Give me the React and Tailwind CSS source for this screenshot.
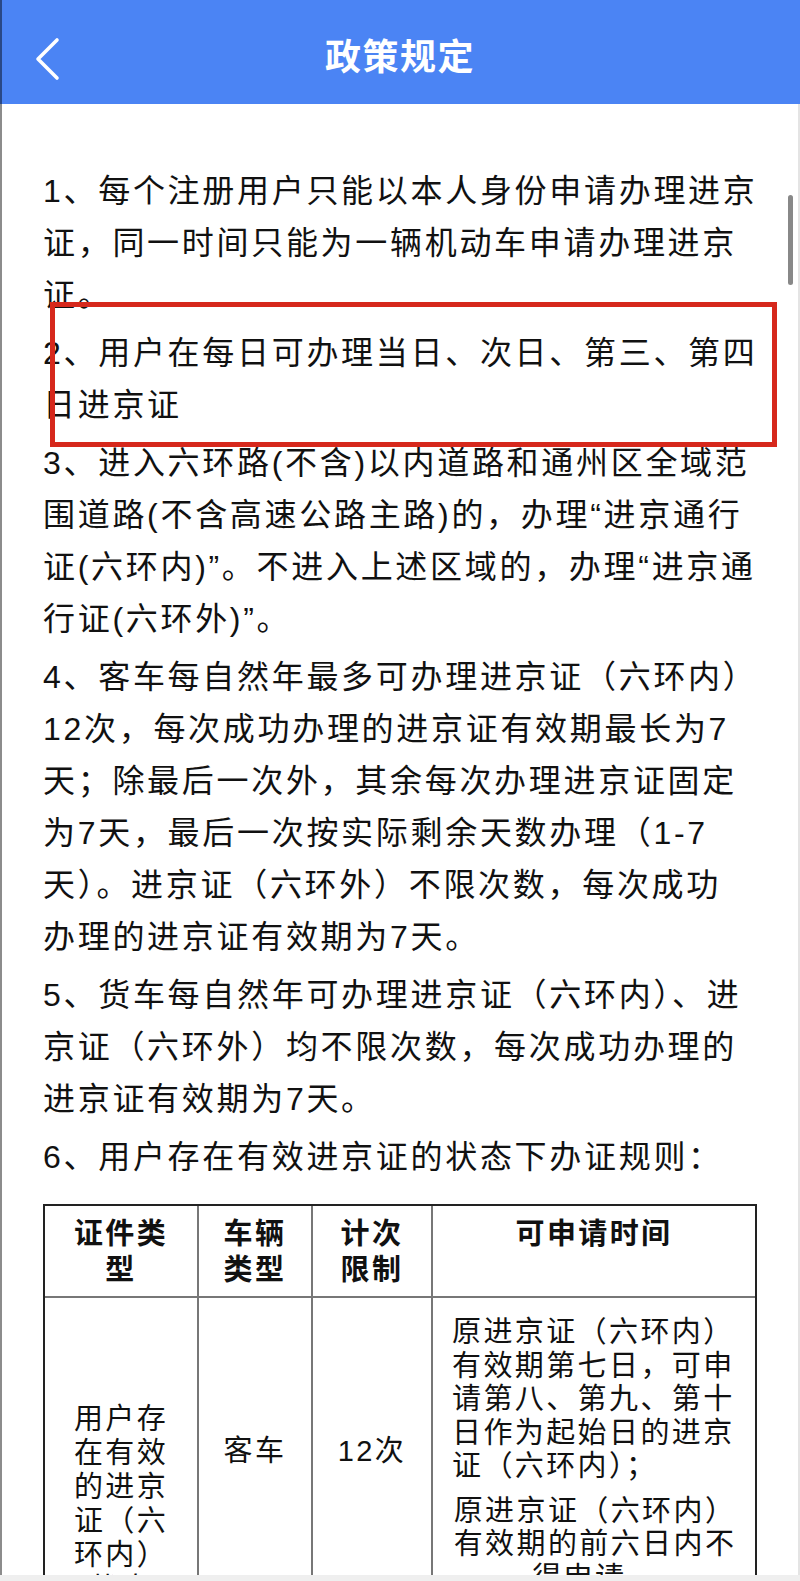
const paragraphs = [
  [
    "1、每个注册用户只能以本人身份申请办理进京",
    "证，同一时间只能为一辆机动车申请办理进京",
    "证。",
  ],
  ["2、用户在每日可办理当日、次日、第三、第四", "日进京证"],
  [
    "3、进入六环路(不含)以内道路和通州区全域范",
    "围道路(不含高速公路主路)的，办理“进京通行",
    "证(六环内)”。不进入上述区域的，办理“进京通",
    "行证(六环外)”。",
  ],
  [
    "4、客车每自然年最多可办理进京证（六环内）",
    "12次，每次成功办理的进京证有效期最长为7",
    "天；除最后一次外，其余每次办理进京证固定",
    "为7天，最后一次按实际剩余天数办理（1-7",
    "天）。进京证（六环外）不限次数，每次成功",
    "办理的进京证有效期为7天。",
  ],
  [
    "5、货车每自然年可办理进京证（六环内）、进",
    "京证（六环外）均不限次数，每次成功办理的",
    "进京证有效期为7天。",
  ],
  ["6、用户存在有效进京证的状态下办证规则："],
];

function Lines({ lines, className = "" }) {
  return (
    <div className={className}>
      {lines.map((l) => (
        <div key={l} className="whitespace-nowrap">
          {l}
        </div>
      ))}
    </div>
  );
}

export default function App() {
  return (
    <div className="relative h-[1581px] w-[800px] overflow-hidden bg-white font-['Liberation_Sans','Noto_Sans_CJK_SC',sans-serif] text-[#111]">
      <header className="relative flex h-[104px] items-center justify-center bg-[#4b84f4] pt-[12px]">
        <svg className="absolute left-[30px] top-[36px] h-[46px] w-[34px]" viewBox="0 0 34 46" fill="none">
          <path d="M27 4 L8 23 L27 42" stroke="white" strokeWidth="3.6" strokeLinecap="round" strokeLinejoin="round" />
        </svg>
        <h1 className="text-[36px] font-bold tracking-[1.5px] text-white">政策规定</h1>
      </header>

      <main className="px-[43px] pt-[61px]">
        <div className="flex flex-col gap-[6px] text-[32px] leading-[52px] tracking-[2.7px]">
          {paragraphs.map((p, i) => (
            <Lines key={i} lines={p} />
          ))}
        </div>

        <table className="mt-[21px] w-[714px] table-fixed border-separate border-spacing-0 border-2 border-[#222] text-[29px] leading-[34px] tracking-[2.4px]">
          <colgroup>
            <col className="w-[154px]" />
            <col className="w-[114px]" />
            <col className="w-[120px]" />
            <col className="w-[322px]" />
          </colgroup>
          <thead>
            <tr className="align-top font-bold leading-[36px]">
              <th className="border-b-2 border-r-2 border-[#777] px-[20px] pb-[8px] pt-[10px]">证件类型</th>
              <th className="border-b-2 border-r-2 border-[#777] px-[20px] pb-[8px] pt-[10px]">车辆类型</th>
              <th className="border-b-2 border-r-2 border-[#777] px-[20px] pb-[8px] pt-[10px]">计次限制</th>
              <th className="border-b-2 border-[#777] px-[10px] pb-[8px] pt-[10px]">可申请时间</th>
            </tr>
          </thead>
          <tbody>
            <tr className="h-[320px] align-top">
              <td className="border-r-2 border-[#777] pt-[104px] text-center">
                <Lines lines={["用户存", "在有效", "的进京", "证（六", "环内）", "状态"]} />
              </td>
              <td className="border-r-2 border-[#777] pt-[136px] text-center">客车</td>
              <td className="border-r-2 border-[#777] pt-[136px] text-center">12次</td>
              <td className="pl-[19px] pt-[18px] leading-[33.5px]">
                <Lines
                  lines={[
                    "原进京证（六环内）",
                    "有效期第七日，可申",
                    "请第八、第九、第十",
                    "日作为起始日的进京",
                    "证（六环内）；",
                  ]}
                />
                <Lines
                  className="mt-[11px] w-[286px] text-center"
                  lines={["原进京证（六环内）", "有效期的前六日内不", "得申请。"]}
                />
              </td>
            </tr>
          </tbody>
        </table>
      </main>

      {/* highlight box drawn over item 2 */}
      <div className="absolute left-[50px] top-[302px] h-[145px] w-[727px] border-[5px] border-[#d6281c]" />
      {/* scroll thumb */}
      <div className="absolute left-[788px] top-[195px] h-[90px] w-[5px] rounded-full bg-[#888]" />
      <div className="absolute left-0 top-0 h-full w-[2px] bg-black/45" />
      <div className="absolute right-0 top-[104px] h-full w-[2px] bg-[#e4e4e4]" />
      <div className="absolute bottom-0 left-0 h-[6px] w-full bg-[#efefef]" />
    </div>
  );
}
